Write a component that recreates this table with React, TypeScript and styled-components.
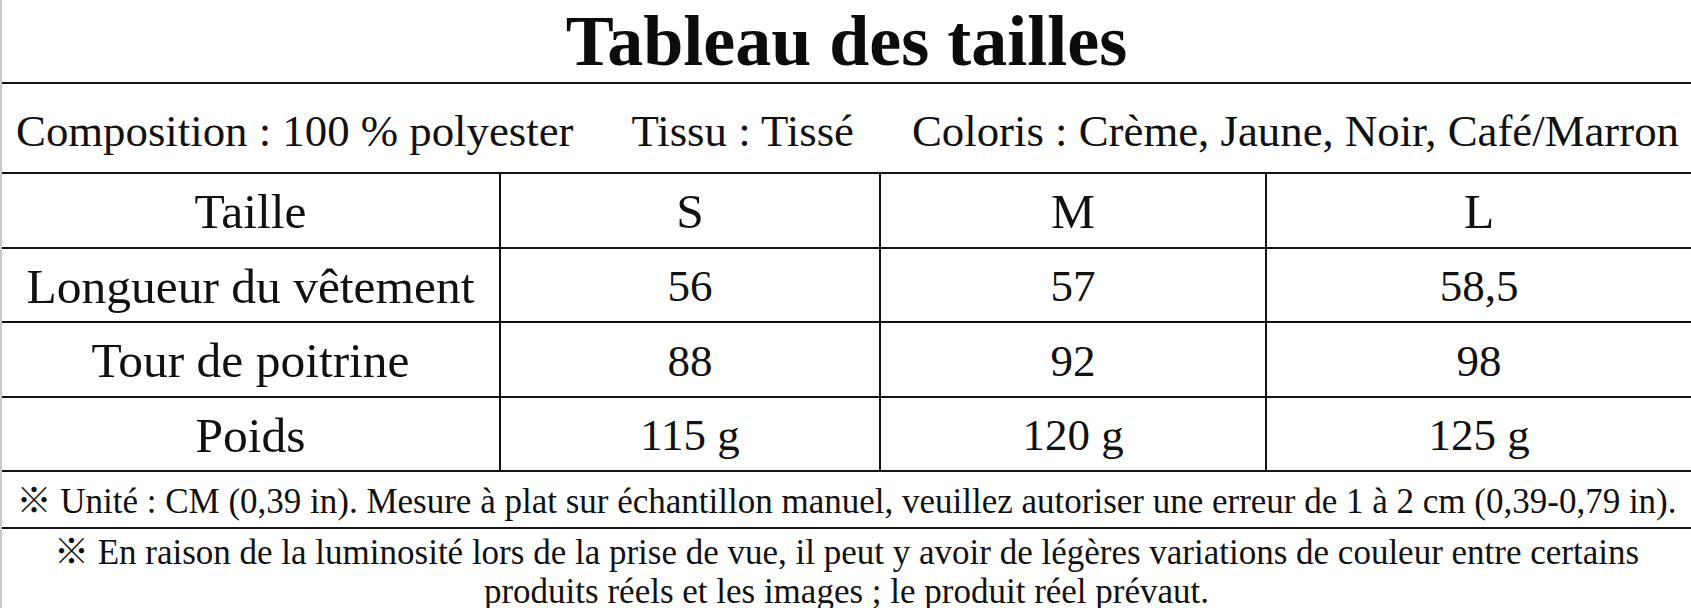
import React from 'react';
import styled, { createGlobalStyle } from 'styled-components';

const GlobalStyle = createGlobalStyle`
  html, body {
    margin: 0;
    padding: 0;
    background: #ffffff;
  }
  body {
    font-family: "Liberation Serif", "DejaVu Serif", "Noto Sans CJK JP", serif;
    color: #111111;
  }
`;

const sizes = ['S', 'M', 'L'];

const rows = [
  { label: 'Longueur du vêtement', values: ['56', '57', '58,5'] },
  { label: 'Tour de poitrine', values: ['88', '92', '98'] },
  { label: 'Poids', values: ['115 g', '120 g', '125 g'] },
];

export default function App() {
  return (
    <>
      <GlobalStyle />
      <Sheet>
        <Title>Tableau des tailles</Title>
        <InfoRow>
          <span>Composition : 100 % polyester</span>
          <span>Tissu : Tissé</span>
          <span>Coloris : Crème, Jaune, Noir, Café/Marron</span>
        </InfoRow>
        <Grid>
          <Cell>Taille</Cell>
          {sizes.map((s, i) => (
            <Cell key={s} last={i === sizes.length - 1}>
              {s}
            </Cell>
          ))}
          {rows.map(row => (
            <React.Fragment key={row.label}>
              <Cell>{row.label}</Cell>
              {row.values.map((v, i) => (
                <Cell key={i} value last={i === row.values.length - 1}>
                  {v}
                </Cell>
              ))}
            </React.Fragment>
          ))}
        </Grid>
        <Note>
          ※ Unité : CM (0,39 in). Mesure à plat sur échantillon manuel, veuillez autoriser une erreur de 1 à 2 cm (0,39-0,79 in).
        </Note>
        <Note tall>
          ※ En raison de la luminosité lors de la prise de vue, il peut y avoir de légères variations de couleur entre certains
          <br />
          produits réels et les images ; le produit réel prévaut.
        </Note>
      </Sheet>
    </>
  );
}

const Sheet = styled.div`
  width: 1689px;
  height: 608px;
  overflow: hidden;
  border-left: 2px solid #c9c9c9;
  display: flex;
  flex-direction: column;
`;

const Title = styled.h1`
  margin: 0;
  height: 84px;
  box-sizing: border-box;
  padding-top: 5px;
  border-bottom: 2px solid #141414;
  text-align: center;
  font-size: 72px;
  line-height: 72px;
  font-weight: 700;
  color: #0c0c0c;
  flex-shrink: 0;
  overflow: hidden;
`;

const InfoRow = styled.div`
  height: 90px;
  box-sizing: border-box;
  flex-shrink: 0;
  border-bottom: 2px solid #141414;
  display: flex;
  align-items: center;
  justify-content: space-between;
  padding: 5px 12px 0 14px;
  font-size: 44.8px;
  white-space: nowrap;
`;

const Grid = styled.div`
  display: grid;
  grid-template-columns: 499px 380px 386px 1fr;
  grid-auto-rows: 74.5px;
  flex-shrink: 0;
`;

const Cell = styled.div<{ last?: boolean; value?: boolean }>`
  display: flex;
  align-items: center;
  justify-content: center;
  padding-top: 3px;
  font-size: ${p => (p.value ? '45px' : '49.5px')};
  white-space: nowrap;
  border-bottom: 2px solid #141414;
  border-right: ${p => (p.last ? 'none' : '2px solid #141414')};
`;

const Note = styled.div<{ tall?: boolean }>`
  flex-shrink: 0;
  box-sizing: border-box;
  height: ${p => (p.tall ? 'auto' : '57px')};
  display: ${p => (p.tall ? 'block' : 'flex')};
  align-items: center;
  justify-content: center;
  padding-top: ${p => (p.tall ? '4px' : '3px')};
  border-bottom: ${p => (p.tall ? 'none' : '2px solid #141414')};
  text-align: center;
  font-size: 35px;
  line-height: 39px;
  white-space: nowrap;
`;
